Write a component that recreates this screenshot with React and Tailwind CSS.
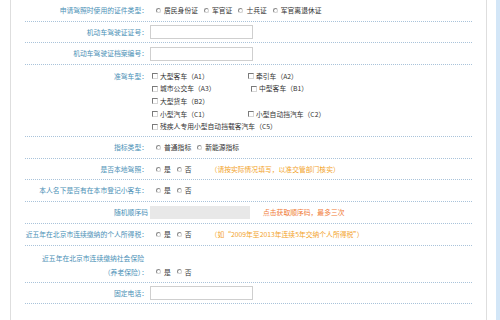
import React from 'react';

const FONT = { fontFamily: '"Noto Sans CJK SC", "Noto Sans", sans-serif' };

function Radio({ label }) {
  return (
    <span className="flex items-center mr-[6px]">
      <span className="w-[5px] h-[5px] rounded-full border border-[#8a8a8a] border-r-[#d0d0d0] border-b-[#d0d0d0] bg-white mr-[3px]" />
      <span className="text-[#333]">{label}</span>
    </span>
  );
}

function Check({ label, className = '' }) {
  return (
    <span className={`flex items-center ${className}`}>
      <span className="w-[6px] h-[6px] border border-[#7a7a7a] border-r-[#d6d6d6] border-b-[#d6d6d6] bg-white mr-[2px]" />
      <span className="text-[#333]">{label}</span>
    </span>
  );
}

function Row({ label, children, tall = false }) {
  return (
    <div
      className={`flex border-b border-dotted border-[#a9c3da] ${
        tall ? 'items-start' : 'items-center h-[21.7px]'
      }`}
    >
      <div className="w-[123px] shrink-0 text-right text-[#4a90b6]">{label}</div>
      <div className="ml-[2px] flex items-center">{children}</div>
    </div>
  );
}

function Input() {
  return <div className="w-[103px] h-[14px] border border-[#cfcfcf] bg-white" />;
}

export default function App() {
  return (
    <div
      className="w-[500px] h-[320px] overflow-hidden flex bg-white text-[6.8px] leading-[12.7px]"
      style={FONT}
    >
      <div className="w-[10px] shrink-0" />
      <div className="w-[477px] shrink-0 border-x border-[#dedede] px-[14px]">
        <Row label="申请驾照时使用的证件类型：">
          <span className="ml-[6px] flex items-center">
            <Radio label="居民身份证" />
            <Radio label="军官证" />
            <Radio label="士兵证" />
            <Radio label="军官离退休证" />
          </span>
        </Row>
        <Row label="机动车驾驶证证号：">
          <Input />
        </Row>
        <Row label="机动车驾驶证档案编号：">
          <Input />
        </Row>
        <div className="flex items-start border-b border-dotted border-[#a9c3da] pt-[4.5px] pb-[3px]">
          <div className="w-[123px] shrink-0 text-right text-[#4a90b6]">准驾车型：</div>
          <div className="ml-[4px] grid grid-cols-[96px_auto]">
            <Check label="大型客车（A1）" />
            <Check label="牵引车（A2）" />
            <Check label="城市公交车（A3）" />
            <Check label="中型客车（B1）" className="ml-[3px]" />
            <Check label="大型货车（B2）" />
            <span />
            <Check label="小型汽车（C1）" />
            <Check label="小型自动挡汽车（C2）" />
            <Check label="残疾人专用小型自动挡载客汽车（C5）" className="col-span-2" />
          </div>
        </div>
        <Row label="指标类型：">
          <span className="ml-[6px] flex items-center">
            <Radio label="普通指标" />
            <Radio label="新能源指标" />
          </span>
        </Row>
        <Row label="是否本地驾照：">
          <span className="ml-[6px] flex items-center">
            <Radio label="是" />
            <Radio label="否" />
            <span className="ml-[13px] text-[#f3a329]">（请按实际情况填写，以准交管部门核实）</span>
          </span>
        </Row>
        <Row label="本人名下是否有在本市登记小客车：">
          <span className="ml-[6px] flex items-center">
            <Radio label="是" />
            <Radio label="否" />
          </span>
        </Row>
        <Row label="随机顺序码">
          <div className="w-[100px] h-[13px] bg-[#e8e8e8]" />
          <span className="ml-[13px] text-[#f07a36]">点击获取顺序码，最多三次</span>
        </Row>
        <Row label="近五年在北京市连续缴纳的个人所得税：">
          <span className="ml-[6px] flex items-center">
            <Radio label="是" />
            <Radio label="否" />
            <span className="ml-[13px] text-[#f3a329]">（如“2009年至2013年连续5年交纳个人所得税”）</span>
          </span>
        </Row>
        <div className="flex items-end border-b border-dotted border-[#a9c3da] pt-[5px] pb-[3px] leading-[14px]">
          <div className="w-[123px] shrink-0 text-right text-[#4a90b6]">
            <div className="pr-[4px]">近五年在北京市连续缴纳社会保险</div>
            <div>（养老保险）：</div>
          </div>
          <div className="ml-[8px] flex items-center h-[14px]">
            <Radio label="是" />
            <Radio label="否" />
          </div>
        </div>
        <Row label="固定电话：">
          <Input />
        </Row>
      </div>
      <div className="w-[9px] shrink-0" />
      <div className="flex-1 bg-[#d3e6f7]" />
    </div>
  );
}
